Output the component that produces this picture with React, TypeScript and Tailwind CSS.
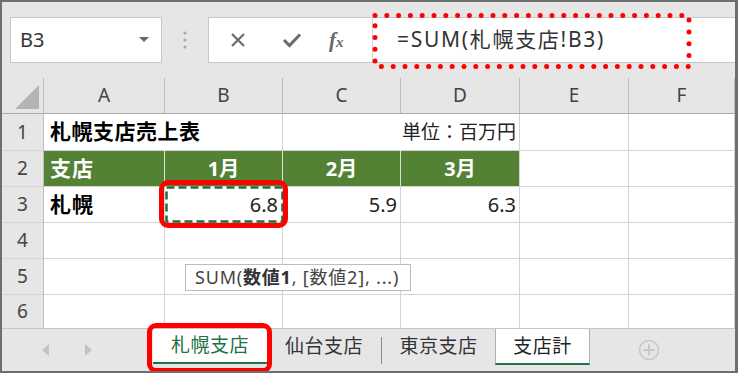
import React from "react";

const font = "font-['Noto_Sans','Noto_Sans_CJK_JP',sans-serif]";

const cols = [
  { id: "A", w: "w-[121px]" },
  { id: "B", w: "w-[118px]" },
  { id: "C", w: "w-[118px]" },
  { id: "D", w: "w-[119px]" },
  { id: "E", w: "w-[109px]" },
  { id: "F", w: "w-[106px]" },
];

const RowHead = ({ n, h }: { n: number; h: string }) => (
  <div
    className={`w-[42px] ${h} shrink-0 bg-[#e6e6e6] border-r border-b border-r-[#bdbdbd] border-b-[#d4d4d4] flex justify-center items-center text-[19px] text-[#444]`}
  >
    {n}
  </div>
);

const Cell = ({ w, className = "", children }: any) => (
  <div
    className={`${w} shrink-0 border-r border-b border-[#d4d4d4] flex items-center ${className}`}
  >
    {children}
  </div>
);

export default function App() {
  return (
    <div
      className={`relative w-[738px] h-[373px] overflow-hidden border-t-2 border-l-2 border-b-2 border-r-[3px] border-[#6f6f6f] bg-[#e6e6e6] flex flex-col ${font}`}
    >
      {/* formula bar */}
      <div className="h-[76px] shrink-0 flex items-center">
        <div className="ml-[8px] w-[152px] h-[46px] bg-white border border-[#c6c6c6] flex items-center justify-between pl-[9px] pr-[12px]">
          <span className="text-[20px] text-[#333]">B3</span>
          <svg width="10" height="6" viewBox="0 0 10 6">
            <path d="M0 0 L10 0 L5 5 Z" fill="#666" />
          </svg>
        </div>
        <div className="w-[46px] flex justify-center">
          <svg width="4" height="18" viewBox="0 0 4 18">
            <circle cx="2" cy="2" r="1.6" fill="#a8a8a8" />
            <circle cx="2" cy="9" r="1.6" fill="#a8a8a8" />
            <circle cx="2" cy="16" r="1.6" fill="#a8a8a8" />
          </svg>
        </div>
        <div className="flex-1 h-[46px] bg-white border border-r-0 border-[#c6c6c6] flex">
          <div className="w-[164px] shrink-0 flex items-center border-r border-[#d4d4d4]">
            <svg className="ml-[21px]" width="16" height="16" viewBox="0 0 16 16">
              <path d="M2 2 L14 14 M14 2 L2 14" stroke="#6b6b6b" strokeWidth="2.2" />
            </svg>
            <svg className="ml-[36px]" width="20" height="16" viewBox="0 0 20 16">
              <path d="M2 8 L7.5 13.5 L18 2.5" stroke="#6b6b6b" strokeWidth="3" fill="none" />
            </svg>
            <span className="ml-[27px] font-['Liberation_Serif',serif] italic font-bold text-[21px] text-[#666] leading-none">
              f<span className="text-[15px]">x</span>
            </span>
          </div>
          <div className="flex items-center pl-[24px] text-[21px] text-[#333] tracking-[1.7px]">
            =SUM(札幌支店!B3)
          </div>
        </div>
      </div>

      {/* column headers */}
      <div className="h-[36px] shrink-0 flex">
        <div className="w-[42px] shrink-0 border-r border-b border-r-[#bdbdbd] border-b-[#ababab] flex justify-end items-end pr-[4px] pb-[4px]">
          <svg width="24" height="24" viewBox="0 0 24 24">
            <path d="M24 0 L24 24 L0 24 Z" fill="#b4b4b4" />
          </svg>
        </div>
        {cols.map((c) => (
          <div
            key={c.id}
            className={`${c.w} shrink-0 border-r border-b border-r-[#bdbdbd] border-b-[#ababab] flex justify-center items-center text-[19px] text-[#444]`}
          >
            {c.id}
          </div>
        ))}
      </div>

      {/* row 1 */}
      <div className="h-[37px] shrink-0 flex bg-white">
        <RowHead n={1} h="h-[37px]" />
        <Cell w="w-[121px]" className="border-r-transparent pl-[6px] whitespace-nowrap overflow-visible font-bold text-[21px] text-black tracking-[0.5px]">
          札幌支店売上表
        </Cell>
        <Cell w="w-[118px]" />
        <Cell w="w-[118px]" className="border-r-transparent" />
        <Cell w="w-[119px]" className="justify-end pr-[3px] whitespace-nowrap text-[19px] text-[#222]">
          単位：百万円
        </Cell>
        <Cell w="w-[109px]" />
        <Cell w="w-[106px]" />
      </div>

      {/* row 2 */}
      <div className="h-[36px] shrink-0 flex bg-white">
        <RowHead n={2} h="h-[36px]" />
        <Cell w="w-[121px]" className="bg-[#548235] border-r-[#dcdcdc] pl-[6px] font-bold text-[21px] text-white tracking-[1px]">
          支店
        </Cell>
        <Cell w="w-[118px]" className="bg-[#548235] border-r-[#dcdcdc] justify-center font-bold text-[20px] text-white">
          1月
        </Cell>
        <Cell w="w-[118px]" className="bg-[#548235] border-r-[#dcdcdc] justify-center font-bold text-[20px] text-white">
          2月
        </Cell>
        <Cell w="w-[119px]" className="bg-[#548235] justify-center font-bold text-[20px] text-white">
          3月
        </Cell>
        <Cell w="w-[109px]" />
        <Cell w="w-[106px]" />
      </div>

      {/* row 3 */}
      <div className="h-[36px] shrink-0 flex bg-white">
        <RowHead n={3} h="h-[36px]" />
        <Cell w="w-[121px]" className="pl-[6px] font-bold text-[21px] text-black tracking-[1px]">
          札幌
        </Cell>
        <Cell w="w-[118px]" className="relative justify-end pr-[4px] text-[20px] text-[#222]">
          6.8
          <svg className="absolute left-0 top-[-1px]" width="119" height="37" viewBox="0 0 119 37">
            <rect x="1.5" y="1.5" width="116" height="34" fill="none" stroke="#1f6e38" strokeWidth="2.5" strokeDasharray="8 4" />
          </svg>
        </Cell>
        <Cell w="w-[118px]" className="justify-end pr-[3px] text-[20px] text-[#222]">
          5.9
        </Cell>
        <Cell w="w-[119px]" className="justify-end pr-[3px] text-[20px] text-[#222]">
          6.3
        </Cell>
        <Cell w="w-[109px]" />
        <Cell w="w-[106px]" />
      </div>

      {[4, 5].map((n) => (
        <div key={n} className="h-[36px] shrink-0 flex bg-white">
          <RowHead n={n} h="h-[36px]" />
          {cols.map((c) => (
            <Cell key={c.id} w={c.w} />
          ))}
        </div>
      ))}

      {/* row 6 (cut) */}
      <div className="h-[33px] shrink-0 flex bg-white overflow-hidden">
        <div className="w-[42px] shrink-0 bg-[#e6e6e6] border-r border-[#bdbdbd] flex justify-center items-start pt-[2px] text-[19px] text-[#444] leading-[28px]">
          6
        </div>
        {cols.map((c) => (
          <div key={c.id} className={`${c.w} shrink-0 border-r border-[#d4d4d4]`} />
        ))}
      </div>

      {/* sheet tabs */}
      <div className="flex-1 flex border-t border-[#c6c6c6] bg-[#e6e6e6]">
        <div className="w-[151px] shrink-0 flex items-start pt-[15px]">
          <svg className="ml-[40px]" width="7" height="12" viewBox="0 0 7 12">
            <path d="M7 0 L7 12 L0 6 Z" fill="#c3c3c3" />
          </svg>
          <svg className="ml-[36px]" width="7" height="12" viewBox="0 0 7 12">
            <path d="M0 0 L0 12 L7 6 Z" fill="#c3c3c3" />
          </svg>
        </div>
        <div className="w-[114px] h-[35px] shrink-0 bg-white border-b-2 border-[#217346] flex items-center justify-center text-[19px] text-[#217346] tracking-[0.5px]">
          札幌支店
        </div>
        <div className="w-[114px] h-[35px] shrink-0 flex items-center justify-center text-[19px] text-[#333] tracking-[0.5px]">
          仙台支店
        </div>
        <div className="w-[1px] h-[27px] mt-[8px] bg-[#8c8c8c] shrink-0" />
        <div className="w-[113px] h-[35px] shrink-0 flex items-center justify-center text-[19px] text-[#333] tracking-[0.5px]">
          東京支店
        </div>
        <div className="w-[95px] h-[36px] shrink-0 bg-white border-l border-r border-[#b0b0b0] border-b-2 border-b-[#217346] flex items-center justify-center text-[19px] text-[#222] tracking-[0.5px]">
          支店計
        </div>
        <div className="flex items-start pt-[10px] ml-[48px]">
          <svg width="22" height="22" viewBox="0 0 22 22">
            <circle cx="11" cy="11" r="9.5" fill="none" stroke="#c8c8c8" strokeWidth="1.6" />
            <path d="M11 5.5 V16.5 M5.5 11 H16.5" stroke="#c8c8c8" strokeWidth="2" />
          </svg>
        </div>
      </div>

      {/* tooltip */}
      <div className="absolute left-[183px] top-[262px] w-[226px] h-[27px] bg-white border border-[#bdbdbd] flex items-center pl-[9px] text-[18px] text-[#444] whitespace-nowrap tracking-[0.8px]">
        SUM(<b className="text-[#333]">数値1</b>, [数値2], ...)
      </div>

      {/* red annotations */}
      <svg className="absolute left-[368px] top-[10px]" width="328" height="62" viewBox="0 0 328 62">
        <rect x="5" y="3.5" width="314" height="51" fill="none" stroke="#ff0000" strokeWidth="5" strokeLinecap="round" strokeDasharray="0 11.8" />
      </svg>
      <div className="absolute left-[157px] top-[178px] w-[129px] h-[48px] border-[5px] border-[#ff0000] rounded-[9px]" />
      <div className="absolute left-[145px] top-[321px] w-[125px] h-[50px] border-[5px] border-[#ff0000] rounded-[9px]" />
    </div>
  );
}
